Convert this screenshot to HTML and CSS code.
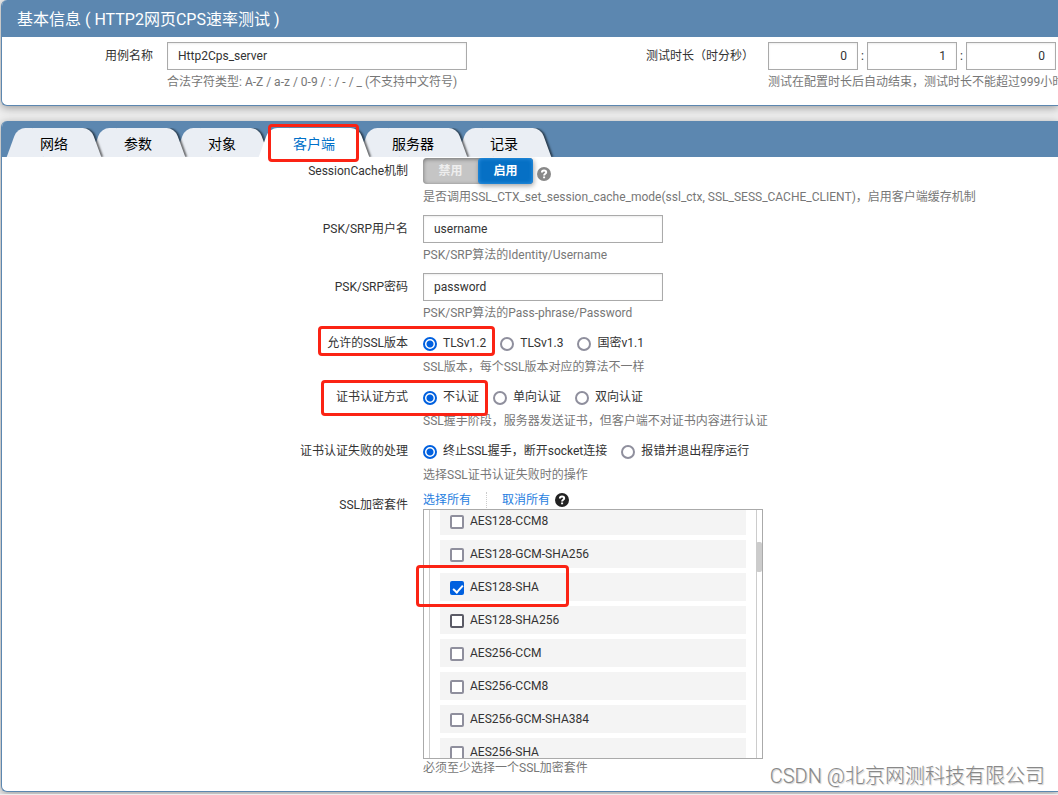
FILE: index.html
```html
<!DOCTYPE html>
<html lang="zh-CN">
<head>
<meta charset="utf-8">
<title>基本信息</title>
<link rel="stylesheet" href="styles.css">
</head>
<body>
<section class="panel info">
  <h1 class="panel-title">基本信息 ( HTTP2网页CPS速率测试 )</h1>
  <div class="info-grid">
    <label class="label" for="case">用例名称</label>
    <div class="field">
      <input class="text wide" id="case" type="text" value="Http2Cps_server">
      <p class="hint">合法字符类型: A-Z / a-z / 0-9 / : / - / _ (不支持中文符号)</p>
    </div>
    <label class="label" for="hours">测试时长（时分秒）</label>
    <div class="field">
      <div class="duration">
        <input class="text num" id="hours" type="text" value="0"><span>:</span><input class="text num" type="text" aria-label="分" value="1"><span>:</span><input class="text num" type="text" aria-label="秒" value="0">
      </div>
      <p class="hint">测试在配置时长后自动结束，测试时长不能超过999小时</p>
    </div>
  </div>
</section>

<section class="panel main">
  <nav class="tabs">
    <button class="tab t1" type="button">网络</button>
    <button class="tab t2" type="button">参数</button>
    <button class="tab t3" type="button">对象</button>
    <button class="tab active" type="button">客户端</button>
    <button class="tab t5" type="button">服务器</button>
    <button class="tab t6" type="button">记录</button>
  </nav>
  <form class="form">
    <div class="row">
      <span class="label">SessionCache机制</span>
      <div class="field">
        <div class="control">
          <div class="switch"><button class="off" type="button">禁用</button><button class="on" type="button">启用</button></div>
          <svg class="help muted" viewBox="0 0 14 14"><circle cx="7" cy="7" r="7"/><path d="M4.9 5.5C4.9 2.8 9.2 2.8 9.2 5.3C9.2 6.9 7.1 6.7 7.1 8.4M7.1 9.6V11.3"/></svg>
        </div>
        <p class="hint">是否调用SSL_CTX_set_session_cache_mode(ssl_ctx, SSL_SESS_CACHE_CLIENT)，启用客户端缓存机制</p>
      </div>
    </div>
    <div class="row">
      <label class="label" for="user">PSK/SRP用户名</label>
      <div class="field">
        <input class="text" id="user" type="text" value="username">
        <p class="hint">PSK/SRP算法的Identity/Username</p>
      </div>
    </div>
    <div class="row">
      <label class="label" for="pass">PSK/SRP密码</label>
      <div class="field">
        <input class="text" id="pass" type="text" value="password">
        <p class="hint">PSK/SRP算法的Pass-phrase/Password</p>
      </div>
    </div>
    <div class="row short">
      <span class="label">允许的SSL版本</span>
      <div class="field">
        <div class="options">
          <label><input type="radio" name="ver" checked>TLSv1.2</label>
          <label><input type="radio" name="ver">TLSv1.3</label>
          <label><input type="radio" name="ver">国密v1.1</label>
        </div>
        <p class="hint">SSL版本，每个SSL版本对应的算法不一样</p>
      </div>
    </div>
    <div class="row short">
      <span class="label">证书认证方式</span>
      <div class="field">
        <div class="options">
          <label><input type="radio" name="auth" checked>不认证</label>
          <label><input type="radio" name="auth">单向认证</label>
          <label><input type="radio" name="auth">双向认证</label>
        </div>
        <p class="hint">SSL握手阶段，服务器发送证书，但客户端不对证书内容进行认证</p>
      </div>
    </div>
    <div class="row short">
      <span class="label">证书认证失败的处理</span>
      <div class="field">
        <div class="options">
          <label><input type="radio" name="fail" checked>终止SSL握手，断开socket连接</label>
          <label><input type="radio" name="fail">报错并退出程序运行</label>
        </div>
        <p class="hint">选择SSL证书认证失败时的操作</p>
      </div>
    </div>
    <div class="row short suites">
      <span class="label">SSL加密套件</span>
      <div class="field">
        <div class="links">
          <a href="#">选择所有</a><a href="#">取消所有</a>
          <svg class="help" viewBox="0 0 14 14"><circle cx="7" cy="7" r="7"/><path d="M4.9 5.5C4.9 2.8 9.2 2.8 9.2 5.3C9.2 6.9 7.1 6.7 7.1 8.4M7.1 9.6V11.3"/></svg>
        </div>
        <div class="listbox">
          <div class="list">
            <label class="item"><input type="checkbox">AES128-CCM8</label>
            <label class="item"><input type="checkbox">AES128-GCM-SHA256</label>
            <label class="item"><input type="checkbox" checked>AES128-SHA</label>
            <label class="item"><input class="dark" type="checkbox">AES128-SHA256</label>
            <label class="item"><input type="checkbox">AES256-CCM</label>
            <label class="item"><input type="checkbox">AES256-CCM8</label>
            <label class="item"><input type="checkbox">AES256-GCM-SHA384</label>
            <label class="item"><input type="checkbox">AES256-SHA</label>
          </div>
          <span class="thumb"></span>
        </div>
        <p class="hint">必须至少选择一个SSL加密套件</p>
      </div>
    </div>
  </form>
</section>
<span class="mark mark-tab"></span>
<span class="mark mark-version"></span>
<span class="mark mark-auth"></span>
<span class="mark mark-suite"></span>
<div class="watermark">CSDN @北京网测科技有限公司</div>
</body>
</html>
```
FILE: styles.css
```css
* { box-sizing: border-box; }
body {
  position: relative;
  margin: 0;
  padding: 0 0 2px 1px;
  background: #eee;
  color: #333;
  font: 12px/18px Roboto, "Noto Sans CJK SC", sans-serif;
  overflow: hidden;
}
button, input { font: inherit; color: inherit; margin: 0; }
p { margin: 0; }
.panel {
  background: #fff;
  border: 1px solid #5c87b0;
  border-width: 0 0 1px 1px;
  border-radius: 6px 0 0 6px;
  box-shadow: 0 2px 8px rgba(0, 0, 0, .35);
  overflow: hidden;
}
.info { margin-bottom: 15px; }
.panel-title {
  margin: 0;
  padding: 2px 15px 0;
  background: #5c87b0;
  color: #fff;
  font-size: 16px;
  font-weight: 400;
  line-height: 35px;
}
.info-grid {
  display: grid;
  grid-template-columns: 151px 1fr 120px 290px;
  column-gap: 14px;
  padding: 5px 0 14px;
}
.label { text-align: right; line-height: 28px; white-space: nowrap; }
.field { display: flex; flex-direction: column; gap: 3px; min-width: 0; }
.hint { color: #777; white-space: nowrap; }
.text {
  width: 240px;
  height: 28px;
  padding: 0 10px;
  border: 1px solid #aaa;
  background: #fff;
  box-shadow: inset 0 1px 2px rgba(0, 0, 0, .08);
}
.wide { width: 300px; }
.num { width: 90px; text-align: right; }
.duration { display: flex; align-items: center; }
.duration span { width: 9px; text-align: center; }

.tabs {
  display: flex;
  height: 36px;
  padding: 7px 0 0 5px;
  background: #5c87b0;
}
.tab {
  position: relative;
  margin-right: -10px;
  padding: 2px 33px 0;
  border: 0;
  background: none;
  color: #000;
  font-size: 14px;
  line-height: 20px;
  isolation: isolate;
}
.tab::before, .tab::after {
  content: "";
  position: absolute;
  z-index: -1;
  top: 0;
  bottom: 0;
  width: 70%;
  background: #eaeef4;
}
.tab::before {
  left: 5px;
  border-radius: 8px 0 0 0;
  transform: skewX(-20deg);
}
.tab::after {
  right: 5px;
  border-radius: 0 8px 0 0;
  transform: skewX(20deg);
  box-shadow: 2px 0 2px rgba(0, 0, 0, .55);
  clip-path: inset(0 -6px 0 8px);
}
.t1 { z-index: 6; }
.t2 { z-index: 5; }
.t3 { z-index: 4; }
.t5 { z-index: 2; }
.t6 { z-index: 1; }
.active { z-index: 7; padding: 2px 34px 0; color: #0070c9; }
.active::before, .active::after { background: #fff; }

.form { padding-bottom: 5px; }
.row {
  display: grid;
  grid-template-columns: 406px 1fr;
  column-gap: 15px;
  padding-bottom: 9px;
}
.short .label { line-height: 24px; }
.control { display: flex; align-items: center; height: 28px; gap: 4px; }
.switch {
  display: flex;
  width: 110px;
  height: 26px;
  border-radius: 4px;
  background: #c5c5c5;
  box-shadow: inset 0 1px 4px rgba(0, 0, 0, .45);
}
.switch button {
  flex: 1;
  padding: 0;
  border: 0;
  border-radius: 4px;
  background: none;
  color: #eee;
  font-weight: 700;
}
.switch .on {
  background: #0670c5;
  color: #fff;
  box-shadow: inset 0 0 4px #3b9be8, 1px 2px 5px rgba(0, 0, 0, .35);
}
.help { width: 14px; height: 14px; fill: #222; }
.help path { fill: none; stroke: #fff; stroke-width: 2; }
.muted { margin-top: 6px; fill: #888; }

.options { display: flex; height: 24px; gap: 14px; }
.options label { display: flex; align-items: center; gap: 6px; white-space: nowrap; }
input[type="radio"], input[type="checkbox"] {
  appearance: none;
  flex: none;
  width: 14px;
  height: 14px;
  margin-top: 2px;
  border: 2px solid #8f8f9d;
  background: #fff;
}
input[type="radio"] { border-radius: 50%; }
input[type="radio"]:checked {
  border-color: #0060df;
  background: radial-gradient(circle, #0060df 3px, #fff 4px);
}
input[type="checkbox"] { border-radius: 2px; }
input.dark { border-color: #5b5b66; }
input[type="checkbox"]:checked { position: relative; border-color: #0060df; background: #0060df; }
input[type="checkbox"]:checked::after {
  content: "";
  position: absolute;
  left: 3px;
  top: 0;
  width: 4px;
  height: 8px;
  border: solid #fff;
  border-width: 0 2px 2px 0;
  transform: rotate(42deg);
}

.suites .field { gap: 0; }
.links { display: flex; align-items: center; height: 16px; padding-bottom: 2px; line-height: 16px; }
.links a { color: #1f7ee0; text-decoration: none; }
.links a:first-child { padding-right: 15px; margin-right: 15px; border-right: 1px dotted #ccc; }
.links .help { margin-left: 5px; }
.listbox {
  position: relative;
  width: 340px;
  height: 250px;
  padding: 0 5px;
  border: 1px solid #aaa;
  overflow: hidden;
}
.list {
  display: flex;
  flex-direction: column;
  gap: 5px;
  margin-top: -3px;
  padding: 0 10px;
  border: solid #ccc;
  border-width: 0 1px;
}
.item {
  display: flex;
  align-items: center;
  gap: 6px;
  height: 28px;
  padding-left: 10px;
  background: #f4f4f4;
}
.thumb {
  position: absolute;
  top: 32px;
  right: 0;
  width: 6px;
  height: 30px;
  border-radius: 2px;
  background: #ccc;
}

.mark {
  position: absolute;
  z-index: 10;
  border: 3px solid #fb2314;
  border-radius: 4px;
  pointer-events: none;
}
.mark-tab { left: 268px; top: 124px; width: 91px; height: 38px; }
.mark-version { left: 318px; top: 326px; width: 177px; height: 30px; }
.mark-auth { left: 321px; top: 380px; width: 167px; height: 36px; }
.mark-suite { left: 416px; top: 565px; width: 153px; height: 42px; }
.watermark {
  position: absolute;
  right: 13px;
  bottom: 5px;
  color: #888;
  font-size: 20px;
  font-weight: 300;
  line-height: 26px;
  white-space: nowrap;
  text-shadow: 1px 1px 1px #ccc;
}
```
